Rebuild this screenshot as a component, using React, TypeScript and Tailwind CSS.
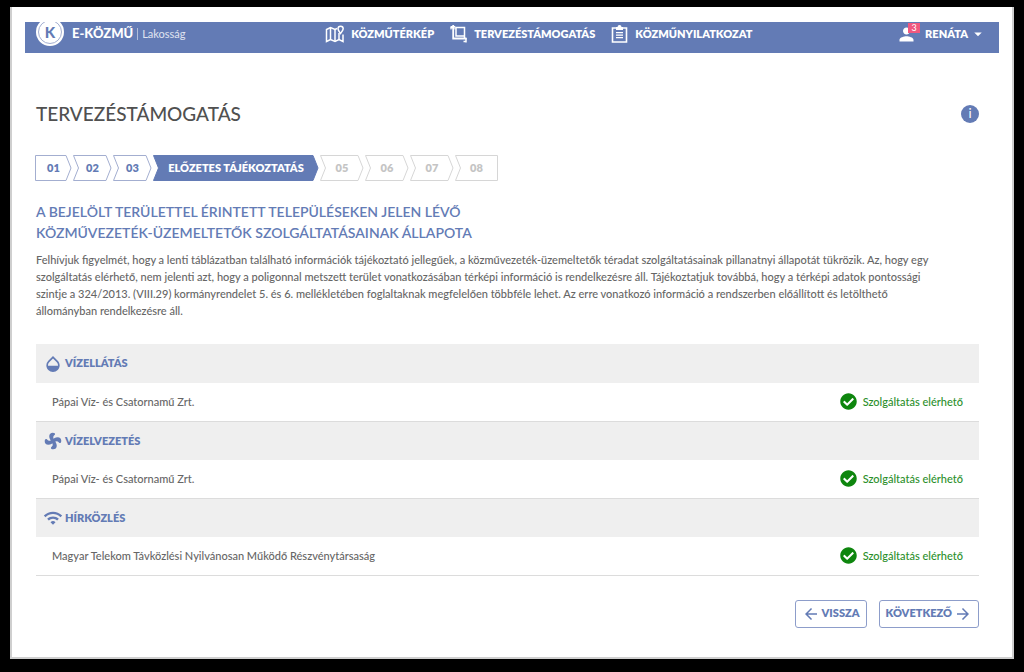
import type { ReactNode } from 'react';
import { FaCheckCircle } from 'react-icons/fa';
import {
  MdArrowBack,
  MdArrowDropDown,
  MdArrowForward,
  MdOpacity,
  MdPerson,
  MdWifi,
} from 'react-icons/md';

const MapIcon = () => (
  <svg viewBox="0 0 20 18" className="h-[18px] w-5" fill="none" stroke="currentColor" strokeWidth="1.5">
    <path d="M12 3.500 10 4.500 5.500 2.500 1.500 4.500v12l4-2 4.500 2 4-2 4 2V9.500" />
    <path d="M5.500 2.500v12M10 4.500v12M14 8v6.500" />
    <path d="M15.500 8.500c-1.500-2-2.500-3.300-2.500-4.700a2.600 2.600 0 0 1 5.200 0c0 1.400-1.200 2.700-2.700 4.700z" />
  </svg>
);

const PlanIcon = () => (
  <svg viewBox="0 0 18 18" className="h-[18px] w-[18px]" fill="none" stroke="currentColor">
    <path strokeWidth="1.800" d="M.5 2.500h4M3.200 0v13.500h13.300" />
    <path strokeWidth="1.500" d="M6 2.500h8.500V11H6zM14.500 11v2.500M16 13v4.500M13.500 16.500H16" />
    <path strokeWidth="1" d="M1 4.500v-3h4v3" />
  </svg>
);

const ClipboardIcon = () => (
  <svg viewBox="0 0 18 18" className="h-[18px] w-[18px]" fill="none" stroke="currentColor">
    <path strokeWidth="1.600" d="M5 3H1.500v14h14V3H12" />
    <path fill="currentColor" stroke="none" d="M5 2h1.500a2 2 0 0 1 4 0H12v3H5z" />
    <path strokeWidth="1.300" d="M5 7.700h7M5 10.200h7M5 12.700h7" />
  </svg>
);

const PinwheelIcon = () => (
  <svg viewBox="0 0 20 20" className="h-[18px] w-[18px]" fill="currentColor">
    {[0, 90, 180, 270].map((deg) => (
      <path
        key={deg}
        transform={`rotate(${deg} 10 10)`}
        d="M10 12C7.500 10 5.800 7.500 5.800 4.800 5.800 2.200 7.500.8 9.800.8c2 0 2.900 1 2.400 2C11.800 3.800 10.300 4 10.300 5.800c0 1.400 1 2.400 1.700 4.200z"
      />
    ))}
  </svg>
);

const menu = [
  { label: 'KÖZMŰTÉRKÉP', icon: <MapIcon /> },
  { label: 'TERVEZÉSTÁMOGATÁS', icon: <PlanIcon /> },
  { label: 'KÖZMŰNYILATKOZAT', icon: <ClipboardIcon /> },
];

type Step = { label: string; w: number; state: 'done' | 'active' | 'next' };

const steps: Step[] = [
  { label: '01', w: 37, state: 'done' },
  { label: '02', w: 39, state: 'done' },
  { label: '03', w: 39, state: 'done' },
  { label: 'ELŐZETES TÁJÉKOZTATÁS', w: 166, state: 'active' },
  { label: '05', w: 44, state: 'next' },
  { label: '06', w: 44, state: 'next' },
  { label: '07', w: 44, state: 'next' },
  { label: '08', w: 43, state: 'next' },
];

const stepStyle = {
  done: 'text-[#637bb5] fill-white stroke-[#a3aed0]',
  active: 'text-white fill-[#637bb5] stroke-[#637bb5]',
  next: 'text-[#c4c4c4] fill-white stroke-[#d6d6d6]',
};

const stepPoints = (w: number, first: boolean, last: boolean) => {
  const right = last ? `${w - 0.5},0.5 ${w - 0.5},25.5` : `${w - 6},0.5 ${w - 1},13 ${w - 6},25.5`;
  const left = first ? '0.5,25.5 0.5,0.5' : '0.5,25.5 5.5,13 0.5,0.5';
  return `${right} ${left}`;
};

const services: { name: string; icon: ReactNode; provider: string }[] = [
  { name: 'VÍZELLÁTÁS', icon: <MdOpacity size={20} />, provider: 'Pápai Víz- és Csatornamű Zrt.' },
  { name: 'VÍZELVEZETÉS', icon: <PinwheelIcon />, provider: 'Pápai Víz- és Csatornamű Zrt.' },
  {
    name: 'HÍRKÖZLÉS',
    icon: <MdWifi size={20} />,
    provider: 'Magyar Telekom Távközlési Nyilvánosan Működő Részvénytársaság',
  },
];

const Header = () => {
  return (
    <header className="flex h-[31px] items-start justify-between overflow-hidden bg-[#637bb5] pr-3 pl-[11px] text-white">
      <a href="#" className="flex items-center">
        <span className="-mt-1 flex h-7 w-7 items-center justify-center rounded-full bg-white">
          <span className="flex h-6 w-6 items-center justify-center rounded-full border border-[#a3aed0] text-[15px] font-black text-[#637bb5]">
            K
          </span>
        </span>
        <span className="ml-2 text-[13px] font-black">E-KÖZMŰ</span>
        <span className="ml-1 border-l border-white/50 pl-1 text-[11px] leading-3 text-white/80">
          Lakosság
        </span>
      </a>
      <nav className="flex h-6 items-center gap-4">
        {menu.map((item) => (
          <a key={item.label} href="#" className="flex items-center gap-[6px] text-[11px] font-extrabold">
            {item.icon}
            {item.label}
          </a>
        ))}
      </nav>
      <button type="button" className="flex h-6 items-center pl-1 text-[11px] font-extrabold">
        <span className="relative mr-1">
          <MdPerson size={21} />
          <span className="absolute -top-px right-[-3px] h-[10px] w-3 bg-[#f0587f] text-center text-[9px] leading-[10px] font-normal">
            3
          </span>
        </span>
        <span className="ml-1">RENÁTA</span>
        <MdArrowDropDown size={18} className="ml-px" />
      </button>
    </header>
  );
};

const Steps = () => {
  return (
    <ol className="-ml-px flex gap-px">
      {steps.map((s, i) => (
        <li key={s.label}>
          <button
            type="button"
            disabled={s.state === 'next'}
            className={`relative block h-[26px] text-[11px] font-extrabold ${stepStyle[s.state]}`}
            style={{ width: s.w }}
          >
            <svg className="absolute inset-0 h-full w-full" aria-hidden="true">
              <polygon points={stepPoints(s.w, i === 0, i === steps.length - 1)} />
            </svg>
            <span className="relative">{s.label}</span>
          </button>
        </li>
      ))}
    </ol>
  );
};

const ServiceTable = () => {
  return (
    <table className="mt-[25px] w-full border-collapse text-[11px]">
      {services.map((s) => (
        <tbody key={s.name}>
          <tr className="h-[39px] bg-[#efefef]">
            <th colSpan={2} scope="colgroup" className="pl-[7px] text-left text-[11px] font-extrabold text-[#637bb5]">
              <span className="flex items-center gap-[2px]">
                <span className="flex w-5 justify-center">{s.icon}</span>
                {s.name}
              </span>
            </th>
          </tr>
          <tr className="h-[38px] border-b border-[#dcdcdc] font-medium">
            <td className="pl-4 text-[#666666]">{s.provider}</td>
            <td className="pr-4 text-[#2b8f2b]">
              <span className="flex items-center justify-end gap-[6px]">
                <FaCheckCircle size={17} className="text-[#0e860e]" />
                Szolgáltatás elérhető
              </span>
            </td>
          </tr>
        </tbody>
      ))}
    </table>
  );
};

const App = () => {
  return (
    <div className="min-h-screen bg-black pt-[7px] pr-[10px] pb-[13px] pl-[10px] font-['Lato',sans-serif]">
      <div className="min-h-[652px] border-r-2 border-b-2 border-l-2 border-[#cfcfcf] bg-white px-[13px] pt-[15px] pb-7">
        <Header />
        <main className="pr-5 pl-[11px]">
          <div className="mt-[47px] flex items-center justify-between">
            <h1 className="text-[19px] leading-7 font-medium text-[#505050]">TERVEZÉSTÁMOGATÁS</h1>
            <button
              type="button"
              aria-label="Információ"
              className="flex h-[18px] w-[18px] items-center justify-center rounded-full bg-[#637bb5] text-[13px] text-white"
            >
              i
            </button>
          </div>
          <div className="mt-[27px]">
            <Steps />
          </div>
          <h2 className="mt-5 text-[14px] leading-[21px] font-semibold text-[#637bb5]">
            A BEJELÖLT TERÜLETTEL ÉRINTETT TELEPÜLÉSEKEN JELEN LÉVŐ
            <br />
            KÖZMŰVEZETÉK-ÜZEMELTETŐK SZOLGÁLTATÁSAINAK ÁLLAPOTA
          </h2>
          <p className="mt-2 text-[11px] leading-[17px] font-medium text-[#666666]">
            Felhívjuk figyelmét, hogy a lenti táblázatban található információk tájékoztató jellegűek, a
            közművezeték-üzemeltetők téradat szolgáltatásainak pillanatnyi állapotát tükrözik. Az, hogy egy
            <br />
            szolgáltatás elérhető, nem jelenti azt, hogy a poligonnal metszett terület vonatkozásában térképi
            információ is rendelkezésre áll. Tájékoztatjuk továbbá, hogy a térképi adatok pontossági
            <br />
            szintje a 324/2013. (VIII.29) kormányrendelet 5. és 6. mellékletében foglaltaknak megfelelően
            többféle lehet. Az erre vonatkozó információ a rendszerben előállított és letölthető
            <br />
            állományban rendelkezésre áll.
          </p>
          <ServiceTable />
          <div className="mt-6 flex justify-end gap-3 text-[11px] font-extrabold text-[#637bb5]">
            <button
              type="button"
              className="flex h-7 items-center gap-[2px] rounded-[3px] border border-[#8d9dca] px-[6px]"
            >
              <MdArrowBack size={18} />
              VISSZA
            </button>
            <button
              type="button"
              className="flex h-7 items-center gap-[2px] rounded-[3px] border border-[#8d9dca] px-[6px]"
            >
              KÖVETKEZŐ
              <MdArrowForward size={18} />
            </button>
          </div>
        </main>
      </div>
    </div>
  );
};

export default App;
